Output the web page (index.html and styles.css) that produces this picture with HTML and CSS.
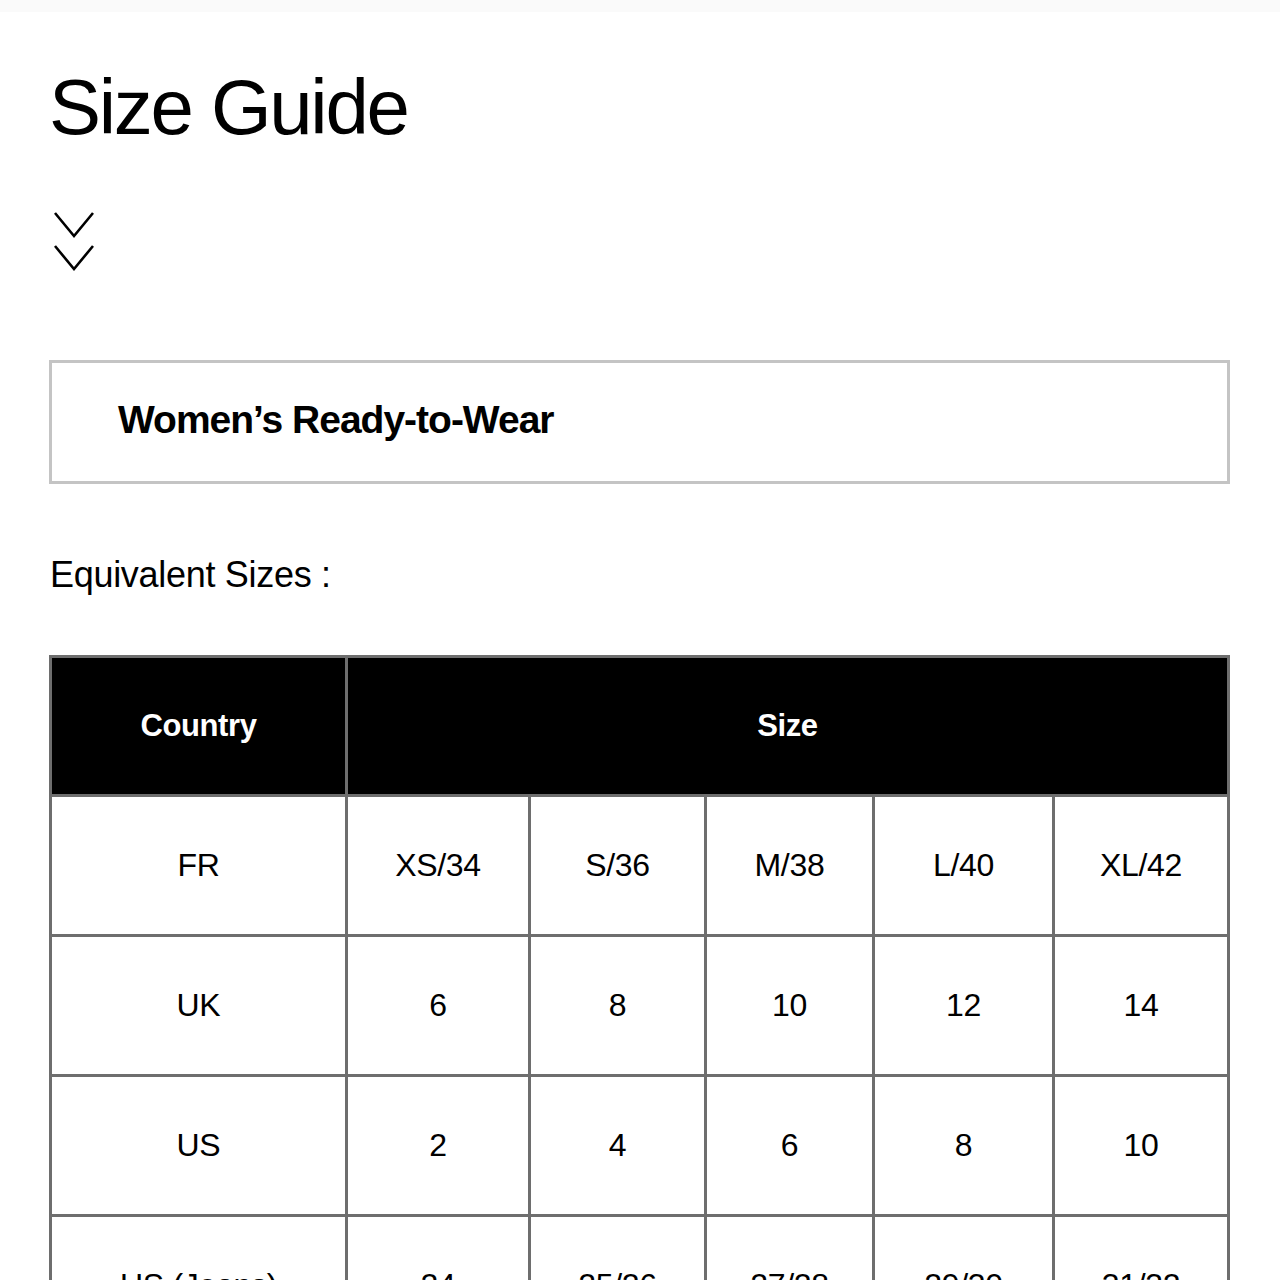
FILE: index.html
```html
<!DOCTYPE html>
<html>
<head>
    <title>Size Guide</title>
    <link rel="stylesheet" href="styles.css">
</head>
<body>
    <div class="topbar"></div>

    <div class="page">
        <h1 class="title">Size Guide</h1>

        <div class="toggle">
            <svg width="42" height="60" viewBox="0 0 42 60">
                <polyline points="2,2 21,25 40,2" fill="none" stroke="#000" stroke-width="2.6"/>
                <polyline points="2,35 21,58 40,35" fill="none" stroke="#000" stroke-width="2.6"/>
            </svg>
        </div>

        <div class="category">Women’s Ready-to-Wear</div>

        <p class="subtitle">Equivalent Sizes :</p>

        <table class="sizes">
            <colgroup>
                <col class="col-country">
                <col class="col-a">
                <col class="col-b">
                <col class="col-c">
                <col class="col-d">
                <col class="col-e">
            </colgroup>
            <thead>
                <tr>
                    <th>Country</th>
                    <th colspan="5">Size</th>
                </tr>
            </thead>
            <tbody>
                <tr>
                    <td>FR</td>
                    <td>XS/34</td>
                    <td>S/36</td>
                    <td>M/38</td>
                    <td>L/40</td>
                    <td>XL/42</td>
                </tr>
                <tr>
                    <td>UK</td>
                    <td>6</td>
                    <td>8</td>
                    <td>10</td>
                    <td>12</td>
                    <td>14</td>
                </tr>
                <tr>
                    <td>US</td>
                    <td>2</td>
                    <td>4</td>
                    <td>6</td>
                    <td>8</td>
                    <td>10</td>
                </tr>
                <tr>
                    <td>US (Jeans)</td>
                    <td>24</td>
                    <td>25/26</td>
                    <td>27/28</td>
                    <td>29/30</td>
                    <td>31/32</td>
                </tr>
            </tbody>
        </table>
    </div>
</body>
</html>
```

FILE: styles.css
```css
body {
    margin: 0;
    background-color: #fff;
    color: #000;
    font-family: "Liberation Sans", Arial, sans-serif;
}

.topbar {
    height: 12px;
    background-color: #fafafa;
}

.page {
    padding: 0 50px 0 49px;
}

.title {
    margin: 56px 0 0 0;
    font-size: 78px;
    line-height: 1;
    font-weight: normal;
    letter-spacing: -2.3px;
}

.toggle {
    margin-top: 65px;
    padding-left: 4px;
    height: 62px;
}

.toggle svg {
    display: block;
}

.category {
    margin-top: 87px;
    height: 118px;
    border: 3px solid #c4c4c4;
    padding-left: 66px;
    display: flex;
    align-items: center;
    font-size: 39px;
    font-weight: bold;
    letter-spacing: -1px;
    padding-bottom: 4px;
    box-sizing: content-box;
    height: 114px;
}

.subtitle {
    margin: 73px 0 0 1px;
    font-size: 36px;
    line-height: 1;
    letter-spacing: -0.3px;
}

.sizes {
    margin-top: 62px;
    width: 1181px;
    border-collapse: collapse;
    table-layout: fixed;
    border: 3px solid #6e6e6e;
}

.col-country { width: 296px; }
.col-a { width: 183px; }
.col-b { width: 176px; }
.col-c { width: 168px; }
.col-d { width: 180px; }
.col-e { width: 175px; }

.sizes th,
.sizes td {
    border: 3px solid #6e6e6e;
    text-align: center;
    padding: 0;
}

.sizes th {
    height: 136px;
    background-color: #000;
    color: #fff;
    font-size: 31px;
    font-weight: bold;
    letter-spacing: -0.4px;
}

.sizes td {
    height: 137px;
    font-size: 32px;
    letter-spacing: -0.3px;
}
```
